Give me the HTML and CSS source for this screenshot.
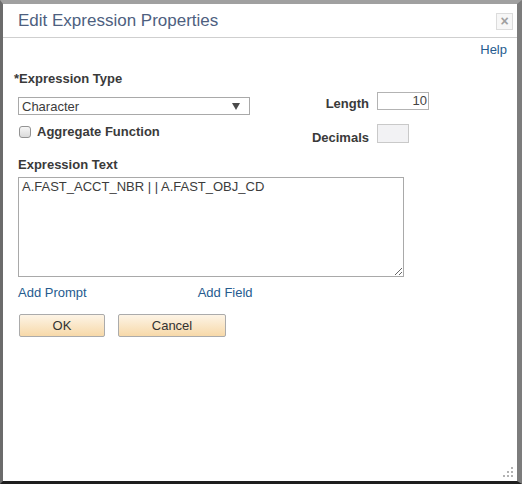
FILE: index.html
```html
<!DOCTYPE html>
<html>
<head>
<meta charset="utf-8">
<link rel="stylesheet" href="styles.css">
</head>
<body>
<div class="frame">
  <div class="dialog">
    <div class="header">
      <div class="title">Edit Expression Properties</div>
      <div class="close">&#215;</div>
    </div>
    <div class="help-row"><a class="link">Help</a></div>
    <div class="content">
      <div class="top">
        <div class="left">
          <div class="label req">*Expression Type</div>
          <div class="select"><span>Character</span><span class="arrow"></span></div>
          <div class="check-row"><span class="checkbox"></span><span class="label">Aggregate Function</span></div>
        </div>
        <div class="right">
          <div class="label rlabel">Length</div>
          <div class="input len">10</div>
          <div class="label rlabel dec-label">Decimals</div>
          <div class="input dec"></div>
        </div>
      </div>
      <div class="label expr-label">Expression Text</div>
      <textarea class="expr">A.FAST_ACCT_NBR | | A.FAST_OBJ_CD</textarea>
      <div class="links"><a class="link">Add Prompt</a><a class="link field">Add Field</a></div>
      <div class="buttons"><button class="btn ok">OK</button><button class="btn cancel">Cancel</button></div>
    </div>
    <div class="grip">
      <svg width="11" height="10" viewBox="0 0 11 10">
        <rect x="8" y="0" width="2" height="2" fill="#b3b3b3"/>
        <rect x="4" y="4" width="2" height="2" fill="#b3b3b3"/>
        <rect x="8" y="4" width="2" height="2" fill="#b3b3b3"/>
        <rect x="0" y="8" width="2" height="2" fill="#b3b3b3"/>
        <rect x="4" y="8" width="2" height="2" fill="#b3b3b3"/>
        <rect x="8" y="8" width="2" height="2" fill="#b3b3b3"/>
      </svg>
    </div>
  </div>
</div>
</body>
</html>
```
FILE: styles.css
```css
* { box-sizing: border-box; }
html, body { margin: 0; padding: 0; }
body {
  width: 522px;
  height: 484px;
  background: #777;
  font-family: "Liberation Sans", Arial, sans-serif;
  font-size: 13px;
  color: #333;
  overflow: hidden;
}
.frame {
  width: 522px;
  height: 484px;
  border-top: 4px solid #a0a0a0;
  border-left: 3px solid #6b6b6b;
  border-right: 5px solid #7c7c7c;
  border-bottom: 3px solid #1e1e1e;
}
.dialog {
  width: 514px;
  height: 477px;
  background: #fff;
  display: flex;
  flex-direction: column;
}
.header {
  height: 34px;
  border-bottom: 1px solid #cfcfcf;
  display: flex;
  align-items: center;
  justify-content: space-between;
  padding: 0 4px 0 15px;
}
.title {
  font-size: 17px;
  color: #4e5f7f;
  line-height: 20px;
}
.close {
  width: 17px;
  height: 17px;
  border: 1px solid #dcdcdc;
  background: #f7f7f7;
  color: #a0a0a0;
  font-size: 14px;
  line-height: 14px;
  text-align: center;
  font-weight: bold;
  margin-top: 2px;
}
.help-row {
  margin-top: 4px;
  line-height: 15px;
  text-align: right;
  padding-right: 10px;
}
.link {
  color: #265b8f;
  text-decoration: none;
}
.content {
  padding-left: 15px;
}
.label {
  font-weight: bold;
  line-height: 15px;
  color: #3a3a3a;
}
.top {
  display: flex;
  align-items: flex-start;
  height: 68px;
  margin-top: 14px;
}
.left {
  width: 232px;
}
.req {
  margin-left: -4px;
}
.select {
  margin-top: 11px;
  height: 18px;
  border: 1px solid #a9a9a9;
  display: flex;
  align-items: center;
  justify-content: space-between;
  padding: 0 9px 0 3px;
  line-height: 15px;
  color: #3c3c3c;
}
.arrow {
  width: 0;
  height: 0;
  border-left: 4px solid transparent;
  border-right: 4px solid transparent;
  border-top: 7px solid #4a4a4a;
}
.check-row {
  margin-top: 9px;
  height: 15px;
  display: flex;
  align-items: center;
  padding-left: 1px;
}
.checkbox {
  width: 12px;
  height: 12px;
  border: 1px solid #939393;
  border-radius: 3px;
  background: linear-gradient(#f6f6f6, #dadada);
  margin-right: 6px;
}
.right {
  display: grid;
  grid-template-columns: 119px auto;
  column-gap: 8px;
  row-gap: 13px;
  padding-top: 21px;
  align-items: start;
}
.rlabel {
  text-align: right;
  padding-top: 4px;
}
.dec-label {
  padding-top: 6px;
}
.input {
  border: 1px solid #b3b3b3;
  line-height: 15px;
  color: #444;
}
.len {
  width: 52px;
  height: 18px;
  text-align: right;
  padding-right: 1px;
}
.dec {
  width: 32px;
  height: 19px;
  background: #f2f2f4;
  border-color: #c9c9c9;
}
.expr-label {
  margin-top: 18px;
}
.expr {
  display: block;
  margin: 5px 0 0 0;
  width: 386px;
  height: 100px;
  border: 1px solid #a9a9a9;
  padding: 1px 3px;
  font-family: "Liberation Sans", Arial, sans-serif;
  font-size: 13px;
  line-height: 15px;
  color: #3c3c3c;
  resize: both;
  outline: none;
}
.links {
  margin-top: 8px;
  line-height: 15px;
  display: flex;
}
.field {
  margin-left: 111px;
}
.buttons {
  margin-top: 14px;
  display: flex;
  gap: 13px;
  padding-left: 1px;
}
.btn {
  height: 23px;
  border: 1px solid #ababab;
  border-radius: 2px;
  background: linear-gradient(#fdf4e6, #f7d9a9);
  font-family: "Liberation Sans", Arial, sans-serif;
  font-size: 13px;
  color: #333;
  padding: 0;
}
.ok { width: 86px; }
.cancel { width: 108px; }
.grip {
  margin-top: auto;
  align-self: flex-end;
  margin-right: 3px;
  margin-bottom: 4px;
  height: 10px;
  line-height: 0;
}
```
